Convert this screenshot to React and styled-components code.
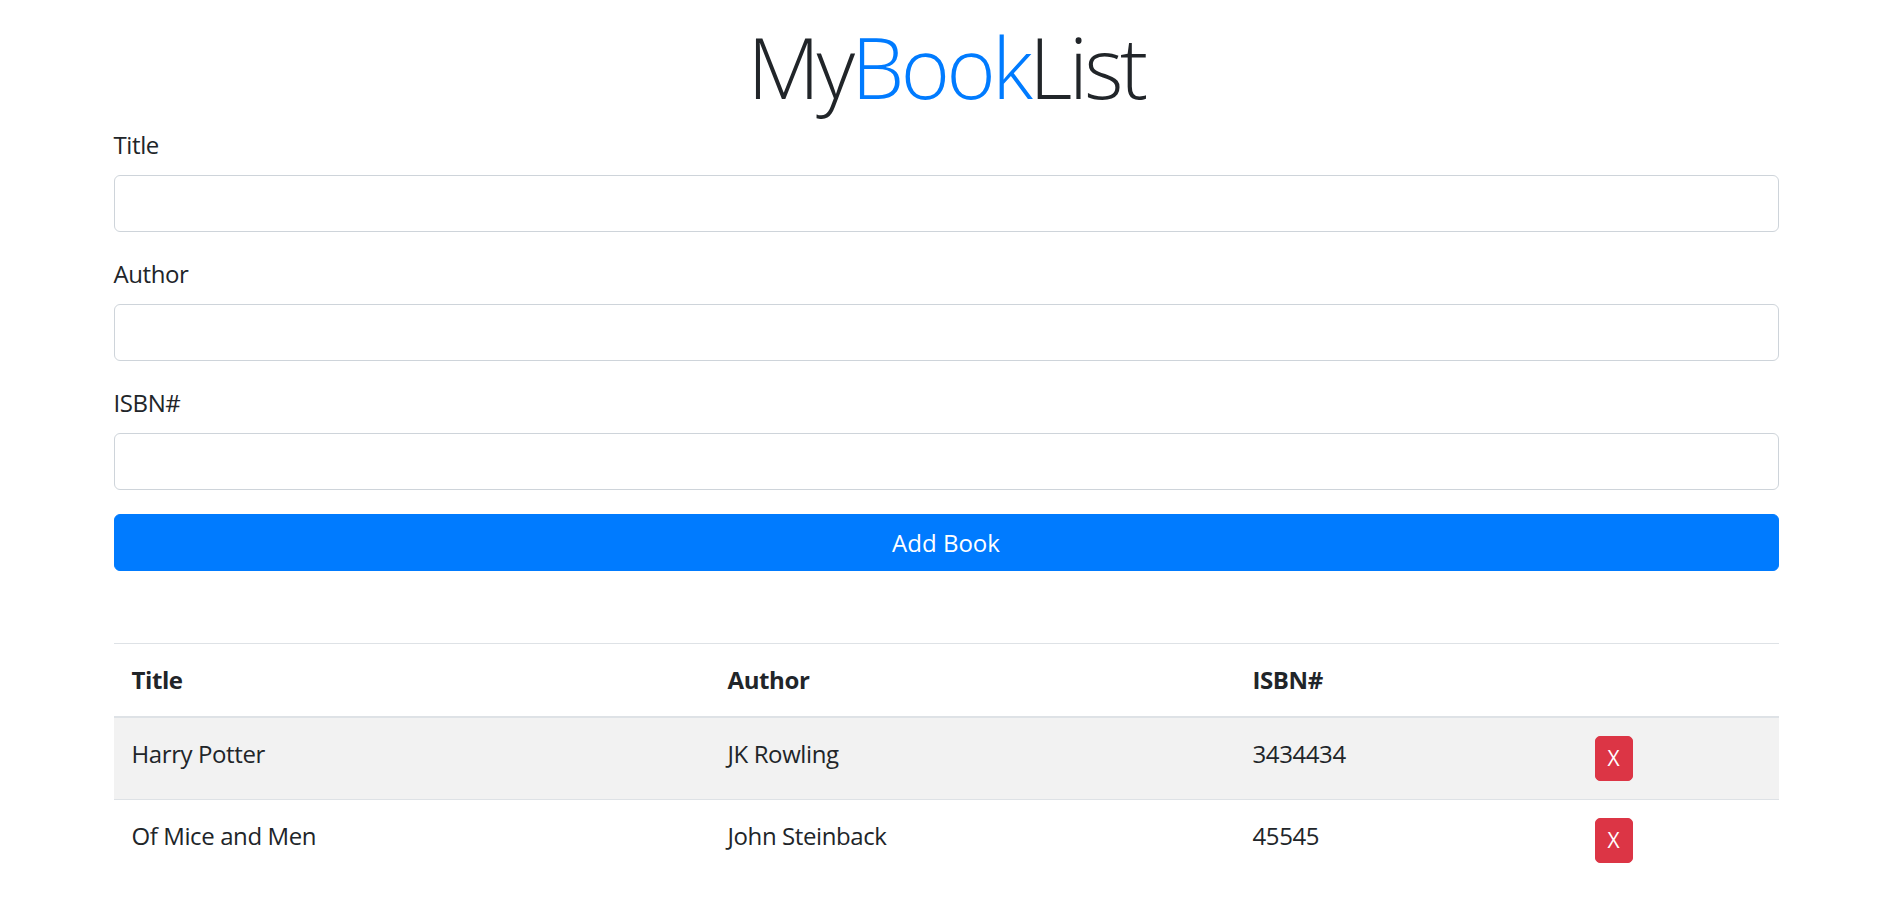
import React, { useState } from "react";
import styled, { createGlobalStyle } from "styled-components";

const GlobalStyle = createGlobalStyle`
  * { box-sizing: border-box; }
  body {
    margin: 0;
    background: #fff;
    color: #212529;
    font-family: "Open Sans", "Noto Sans", sans-serif;
    font-size: 24px;
    line-height: 1.5;
    letter-spacing: -0.4px;
  }
`;

const Container = styled.div`
  width: 1665px;
  margin: 0 auto;
`;

const Heading = styled.h1`
  margin: 16px 0 10px;
  text-align: center;
  font-size: 84px;
  font-weight: 300;
  line-height: 101px;
  letter-spacing: -3.5px;
`;

const Accent = styled.span`
  color: #007bff;
`;

const FormGroup = styled.div`
  margin-bottom: 24px;
`;

const Label = styled.label`
  display: block;
  margin-bottom: 12px;
  font-size: 24px;
  line-height: 36px;
`;

const Input = styled.input`
  display: block;
  width: 100%;
  height: 57px;
  padding: 9px 18px;
  font: inherit;
  color: #495057;
  background: #fff;
  border: 1px solid #ced4da;
  border-radius: 6px;
  outline: none;
`;

const SubmitButton = styled.button`
  display: block;
  width: 100%;
  height: 57px;
  padding: 9px 18px;
  font: inherit;
  line-height: 36px;
  color: #fff;
  background: #007bff;
  border: 1px solid #007bff;
  border-radius: 6px;
  cursor: pointer;
`;

const Table = styled.table`
  width: 100%;
  margin-top: 72px;
  border-collapse: collapse;
  table-layout: fixed;
`;

const Col = styled.col`
  width: ${p => p.$w}px;
`;

const Th = styled.th`
  padding: 18px;
  text-align: left;
  vertical-align: bottom;
  font-weight: 700;
  line-height: 36px;
  border-top: 1px solid #dee2e6;
  border-bottom: 2px solid #dee2e6;
`;

const Row = styled.tr`
  background: ${p => (p.$striped ? "#f2f2f2" : "transparent")};
`;

const Td = styled.td`
  padding: 18px;
  vertical-align: top;
  line-height: 36px;
  border-top: 1px solid #dee2e6;
`;

const DeleteButton = styled.button`
  display: block;
  width: 38px;
  height: 45px;
  padding: 0;
  font-family: inherit;
  font-size: 21px;
  line-height: 31px;
  color: #fff;
  background: #dc3545;
  border: 1px solid #dc3545;
  border-radius: 5px;
  cursor: pointer;
`;

const initialBooks = [
  { title: "Harry Potter", author: "JK Rowling", isbn: "3434434" },
  { title: "Of Mice and Men", author: "John Steinback", isbn: "45545" },
];

export default function App() {
  const [books, setBooks] = useState(initialBooks);
  const [title, setTitle] = useState("");
  const [author, setAuthor] = useState("");
  const [isbn, setIsbn] = useState("");

  const addBook = e => {
    e.preventDefault();
    if (!title || !author || !isbn) return;
    setBooks([...books, { title, author, isbn }]);
    setTitle("");
    setAuthor("");
    setIsbn("");
  };

  const removeBook = idx => {
    setBooks(books.filter((_, i) => i !== idx));
  };

  return (
    <>
      <GlobalStyle />
      <Container>
        <Heading>
          My<Accent>Book</Accent>List
        </Heading>
        <form onSubmit={addBook}>
          <FormGroup>
            <Label htmlFor="title">Title</Label>
            <Input id="title" value={title} onChange={e => setTitle(e.target.value)} />
          </FormGroup>
          <FormGroup>
            <Label htmlFor="author">Author</Label>
            <Input id="author" value={author} onChange={e => setAuthor(e.target.value)} />
          </FormGroup>
          <FormGroup>
            <Label htmlFor="isbn">ISBN#</Label>
            <Input id="isbn" value={isbn} onChange={e => setIsbn(e.target.value)} />
          </FormGroup>
          <SubmitButton type="submit">Add Book</SubmitButton>
        </form>

        <Table>
          <colgroup>
            <Col $w={596} />
            <Col $w={525} />
            <Col $w={342} />
            <Col $w={202} />
          </colgroup>
          <thead>
            <tr>
              <Th>Title</Th>
              <Th>Author</Th>
              <Th>ISBN#</Th>
              <Th></Th>
            </tr>
          </thead>
          <tbody>
            {books.map((b, i) => (
              <Row key={i} $striped={i % 2 === 0}>
                <Td>{b.title}</Td>
                <Td>{b.author}</Td>
                <Td>{b.isbn}</Td>
                <Td>
                  <DeleteButton onClick={() => removeBook(i)}>X</DeleteButton>
                </Td>
              </Row>
            ))}
          </tbody>
        </Table>
      </Container>
    </>
  );
}
